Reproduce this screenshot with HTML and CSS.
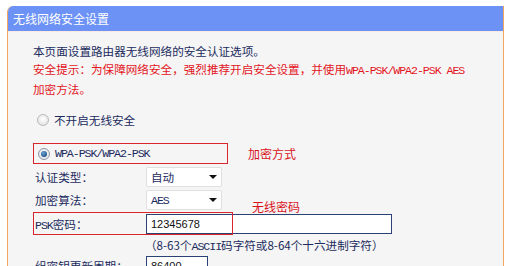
FILE: index.html
```html
<!DOCTYPE html>
<html lang="zh-CN">
<head>
    <meta charset="UTF-8">
    <meta name="viewport" content="width=device-width, initial-scale=1.0">
    <title>无线网络安全设置</title>
    <link rel="stylesheet" href="styles.css">
</head>
<body>
    <div class="panel">
        <div class="panel-head">无线网络安全设置</div>
        <div class="panel-body">
            <p class="intro">本页面设置路由器无线网络的安全认证选项。</p>
            <p class="tip">安全提示：为保障网络安全，强烈推荐开启安全设置，并使用<span class="latin">WPA-PSK/WPA2-PSK AES</span><br>加密方法。</p>

            <label class="radio-row off-row">
                <span class="radio"></span>
                <span>不开启无线安全</span>
            </label>

            <div class="mode-line">
                <label class="radio-row mode-box">
                    <span class="radio checked"></span>
                    <span class="latin">WPA-PSK/WPA2-PSK</span>
                </label>
                <span class="note">加密方式</span>
            </div>

            <div class="field">
                <span class="field-label">认证类型：</span>
                <div class="select"><span>自动</span><i class="caret"></i></div>
            </div>
            <div class="field">
                <span class="field-label">加密算法：</span>
                <div class="select"><span class="latin">AES</span><i class="caret"></i></div>
            </div>
            <div class="field psk-field">
                <span class="field-label"><span class="latin">PSK</span>密码：</span>
                <div class="input wide">12345678</div>
                <span class="mark-box"></span>
                <span class="note psk-note">无线密码</span>
            </div>
            <p class="hint">（8-63个<span class="latin">ASCII</span>码字符或8-64个十六进制字符）</p>
            <div class="field">
                <span class="field-label">组密钥更新周期：</span>
                <div class="input short">86400</div>
            </div>
        </div>
    </div>
</body>
</html>
```

FILE: styles.css
```css
* {
    margin: 0;
    padding: 0;
    box-sizing: border-box;
}

body {
    background: #fff;
    font-family: "Noto Sans CJK SC", "Liberation Sans", sans-serif;
    font-size: 11.6px;
    color: #1b2b5e;
    overflow: hidden;
}

.panel {
    margin: 6px 0 0 7px;
    width: 497px;
    height: 300px;
    border-left: 1px solid #f2a660;
    border-right: 1px solid #f2a660;
    border-top-left-radius: 6px;
    background: #f5f5f5;
    overflow: hidden;
}

.panel-head {
    height: 26px;
    line-height: 26px;
    padding-left: 5px;
    background: #6c92f6;
    color: #fff;
    font-size: 12px;
    border-bottom: 1px solid #fbe9e4;
}

.panel-body {
    padding: 10px 0 0 25px;
}

.intro,
.tip {
    line-height: 18px;
}

.tip {
    color: #e3151e;
}

.latin {
    font-family: "Liberation Mono", monospace;
    font-size: 11.6px;
    letter-spacing: -1.05px;
}

.radio-row {
    display: flex;
    align-items: center;
    gap: 5px;
    height: 18px;
}

.off-row {
    margin-top: 13px;
    padding-left: 4px;
}

.radio {
    width: 12px;
    height: 12px;
    border-radius: 50%;
    border: 1px solid #b9b9b9;
    background: radial-gradient(circle at 50% 40%, #ffffff 0, #e6e6e6 70%);
    position: relative;
}

.radio.checked {
    border-color: #8a97a8;
}

.radio.checked::after {
    content: "";
    position: absolute;
    left: 2px;
    top: 2px;
    width: 6px;
    height: 6px;
    border-radius: 50%;
    background: radial-gradient(circle at 40% 35%, #6aa6d8 0, #1d4e86 75%);
}

.mode-line {
    display: flex;
    align-items: center;
    gap: 20px;
    margin-top: 14px;
    height: 21px;
}

.mode-box {
    width: 195px;
    height: 21px;
    padding-left: 4px;
    border: 1px solid #d9262c;
}

.note {
    color: #d8141c;
    font-size: 12px;
}

.field {
    display: flex;
    align-items: center;
    height: 20px;
    margin-top: 3px;
}

.field-label {
    width: 113px;
    padding-left: 2px;
}

.select {
    width: 76px;
    height: 20px;
    display: flex;
    align-items: center;
    justify-content: space-between;
    padding: 0 4px 0 4px;
    background: #fff;
    border: 1px solid #e0e0e0;
    border-radius: 2px;
}

.caret {
    border-left: 4px solid transparent;
    border-right: 4px solid transparent;
    border-top: 4px solid #111;
}

.psk-field {
    position: relative;
    margin-top: 4px;
}

.input {
    height: 20px;
    line-height: 18px;
    padding-left: 4px;
    background: #fff;
    border: 1px solid #2c4275;
    font-family: "Liberation Sans", sans-serif;
    font-size: 11px;
    color: #111;
}

.wide {
    width: 246px;
}

.short {
    width: 62px;
}

.mark-box {
    position: absolute;
    left: 0;
    top: -2px;
    width: 200px;
    height: 23px;
    border: 1px solid #d9262c;
}

.psk-note {
    position: absolute;
    left: 219px;
    top: -14px;
    line-height: 14px;
}

.hint {
    height: 20px;
    line-height: 20px;
    padding-left: 112px;
    margin-top: 1px;
}

.field:last-child {
    margin-top: 1px;
}
```
